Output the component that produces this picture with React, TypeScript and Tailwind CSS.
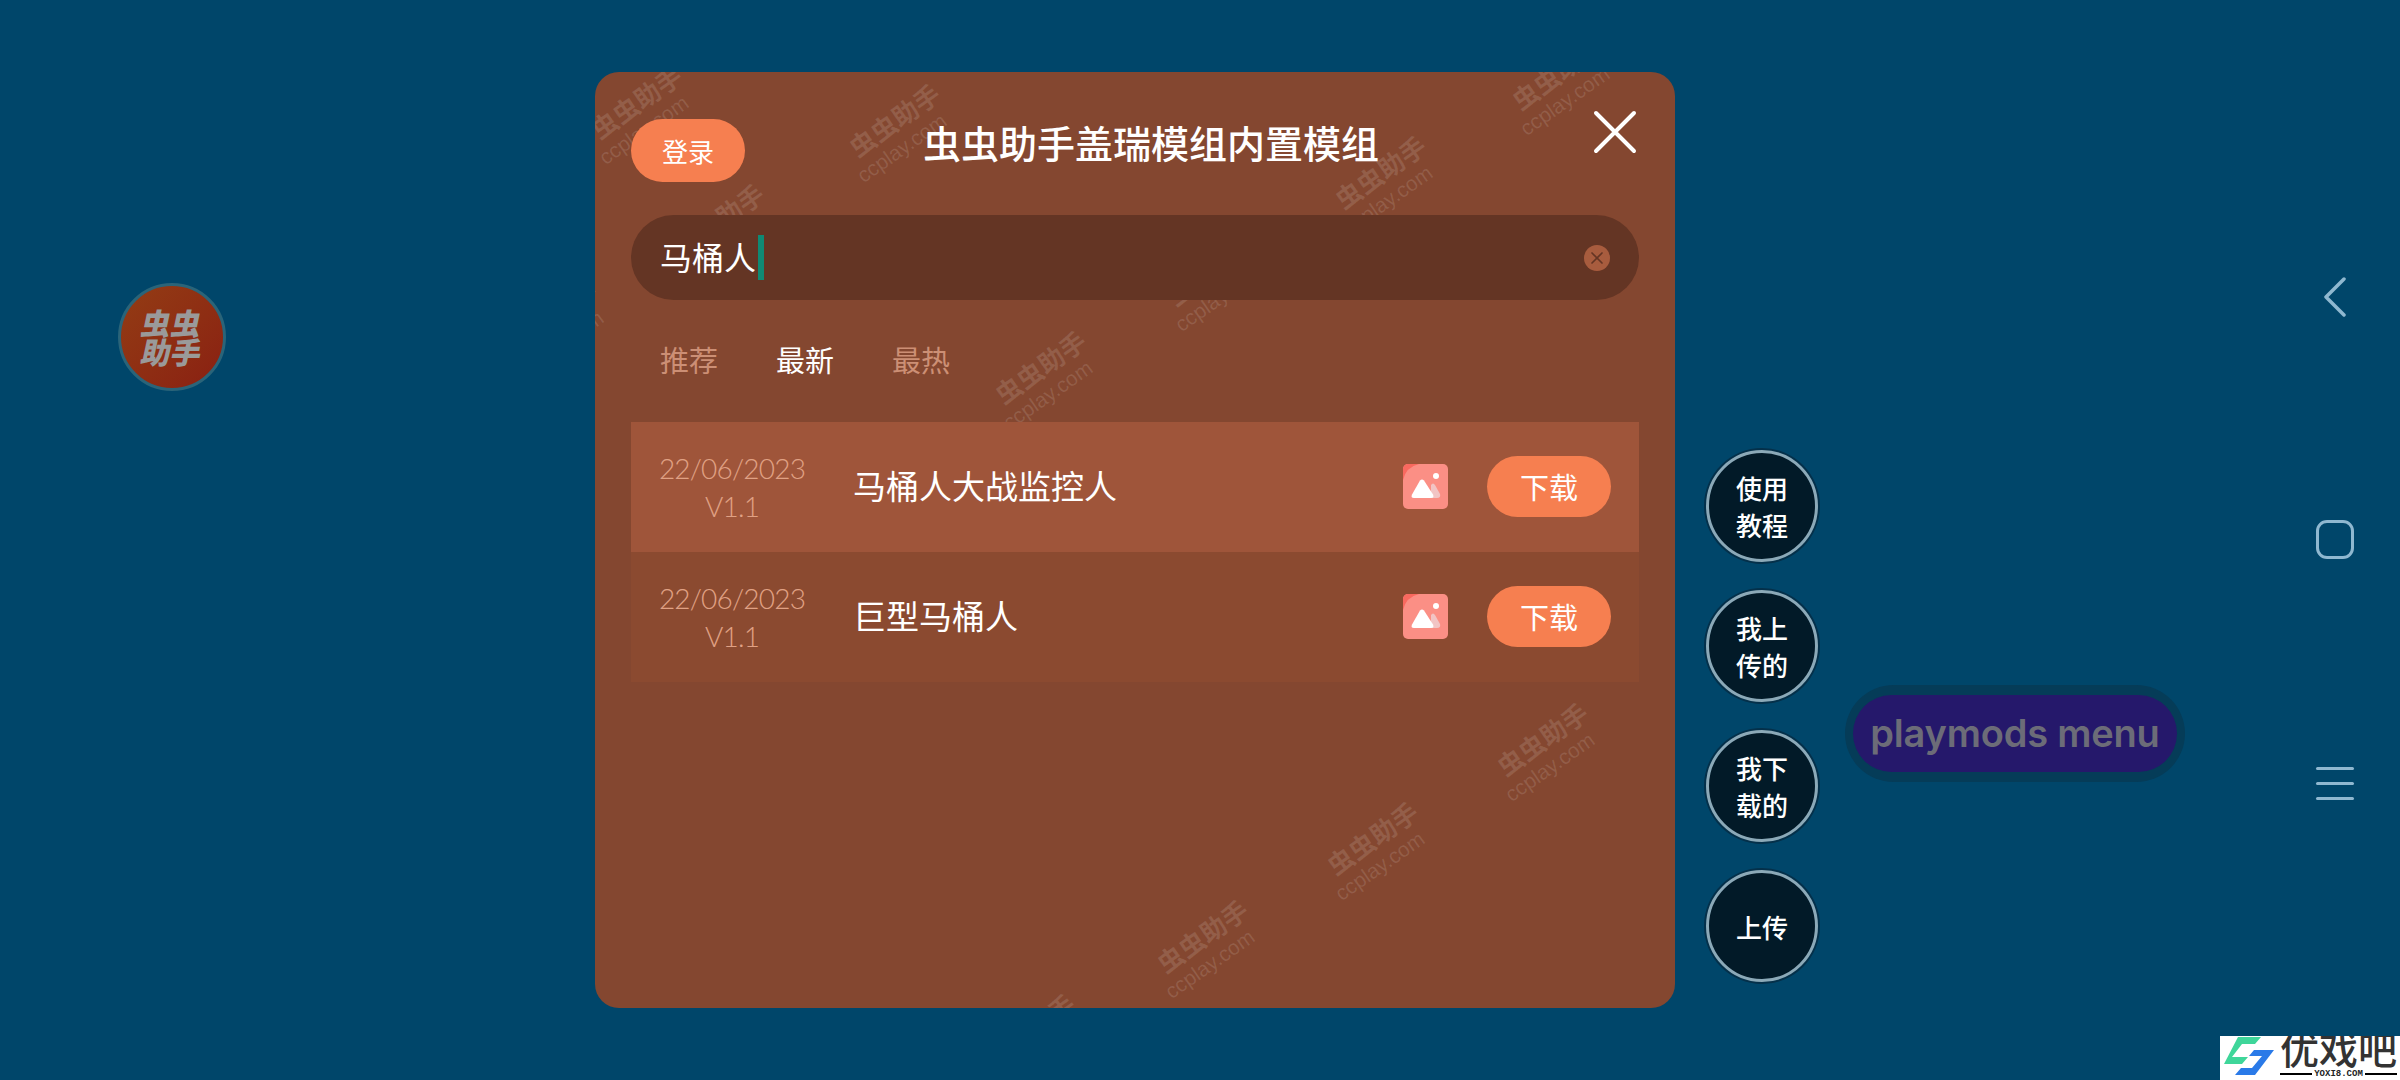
import React from "react";
import { X } from "lucide-react";

const cjk = "font-['Noto_Sans_CJK_SC','Noto_Sans',sans-serif]";

const watermarks = [
  "left-[-21px] top-[11px]",
  "left-[237px] top-[29px]",
  "left-[61px] top-[129px]",
  "left-[723px] top-[81px]",
  "left-[900px] top-[-18px]",
  "left-[383px] top-[276px]",
  "left-[555px] top-[178px]",
  "left-[-106px] top-[226px]",
  "left-[885px] top-[648px]",
  "left-[715px] top-[747px]",
  "left-[545px] top-[845px]",
  "left-[372px] top-[939px]",
];

const mods = [
  { name: "马桶人大战监控人", bg: "bg-[#9f553a]" },
  { name: "巨型马桶人", bg: "bg-[#8b4a30]" },
];

const sideButtons = [["使用", "教程"], ["我上", "传的"], ["我下", "载的"], ["上传"]];

const ImageIcon: React.FC = () => (
  <svg width="45" height="45" viewBox="0 0 45 45">
    <rect width="45" height="45" rx="5" fill="#fb8f85" />
    <path d="M0 16V5a5 5 0 0 1 5-5h11Q3 3 0 16Z" fill="#f9695f" />
    <circle cx="33" cy="12" r="3" fill="#fff" />
    <path d="M28 21q2-3 4 0l5 9q1 4-3 4h-6Z" fill="#f2c4c4" />
    <path d="M17 16.500q2-2 4 0l9 14q1.500 3.500-2 3.500H11q-3.500 0-2-3.500Z" fill="#fff" />
  </svg>
);

const App: React.FC = () => {
  return (
    <div className={`relative flex h-[1080px] w-[2400px] overflow-hidden bg-[#00466a] pl-[595px] pt-[72px] ${cjk}`}>
      {/* floating logo */}
      <div className="absolute left-[118px] top-[283px] flex h-[108px] w-[108px] flex-col items-center justify-center rounded-full border-[3px] border-[#2a6479] bg-linear-to-br from-[#933c14] to-[#8a1f12] text-[30px] leading-[29px] font-black text-[#9a9a9a]">
        <span className="-skew-x-12">虫虫</span>
        <span className="-skew-x-12">助手</span>
      </div>

      {/* main dialog */}
      <div className="relative h-[936px] w-[1080px] shrink-0 overflow-hidden rounded-[24px] bg-[#844730] px-[36px]">
        {watermarks.map((pos) => (
          <div
            key={pos}
            className={`absolute flex h-[60px] w-[140px] -rotate-[35deg] flex-col items-center text-white/12 ${pos}`}
          >
            <span className="text-[26px] leading-[32px] font-bold whitespace-nowrap">虫虫助手</span>
            <span className="mr-[20px] font-['Liberation_Sans',sans-serif] text-[21px] leading-[24px] whitespace-nowrap">ccplay.com</span>
          </div>
        ))}

        <div className="relative flex h-[143px] items-start pt-[38px]">
          <button className="mt-[9px] flex h-[63px] w-[114px] items-center justify-center rounded-full bg-[#f67f50] text-[26px] text-white">
            登录
          </button>
          <h1 className="ml-[178px] mt-[7px] text-[38px] leading-[50px] font-medium whitespace-nowrap text-white">
            虫虫助手盖瑞模组内置模组
          </h1>
          <svg width="44" height="44" viewBox="0 0 44 44" fill="none" stroke="#fff" strokeWidth="4" strokeLinecap="round" className="ml-auto mr-[2px]">
            <path d="M3 3l38 38M41 3L3 41" />
          </svg>
        </div>

        <div className="relative flex h-[85px] items-center rounded-full bg-[#643524] pl-[29px] pr-[29px]">
          <span className="mb-[4px] text-[32px] leading-[40px] text-white">马桶人</span>
          <span className="ml-[2px] h-[45px] w-[6px] bg-[#0f8a74]" />
          <span className="ml-auto flex h-[26px] w-[26px] items-center justify-center rounded-full bg-[#a85c3e] text-[#643524]">
            <X size={20} strokeWidth={2} />
          </span>
        </div>

        <div className="relative mt-[41px] flex gap-[58px] pl-[29px] text-[29px] leading-[36px] text-[#cc8f75]">
          <span>推荐</span>
          <span className="text-white">最新</span>
          <span>最热</span>
        </div>

        <div className="relative mt-[45px]">
          {mods.map((mod) => (
            <div key={mod.name} className={`flex h-[130px] items-center pl-[28px] pr-[28px] ${mod.bg}`}>
              <div className="flex w-[146px] flex-col items-center font-['Lato',sans-serif] text-[28px] leading-[38px] font-light tracking-[-0.8px] text-[#e0a184]">
                <span>22/06/2023</span>
                <span>V1.1</span>
              </div>
              <span className="mb-[2px] ml-[48px] text-[33px] text-white">{mod.name}</span>
              <span className="mb-[1px] ml-auto flex">
                <ImageIcon />
              </span>
              <button className="mb-[1px] ml-[39px] flex h-[61px] w-[124px] items-center justify-center rounded-full bg-[#f67f50] text-[29px] text-white">
                下载
              </button>
            </div>
          ))}
        </div>
      </div>

      {/* side actions */}
      <div className="ml-[31px] mt-[378px] flex flex-col gap-[28px]">
        {sideButtons.map((lines) => (
          <button
            key={lines.join("")}
            className="flex h-[112px] w-[112px] flex-col items-center justify-center rounded-full border-[3px] border-[#8ba9b8] bg-[#021a28] text-[26px] leading-[37px] font-medium text-white shadow-[0_0_0_2px_#04304a]"
          >
            {lines.map((line) => (
              <span key={line}>{line}</span>
            ))}
          </button>
        ))}
      </div>

      {/* floating menu */}
      <div className="absolute left-[1845px] top-[685px] flex h-[97px] w-[340px] items-center justify-center rounded-full bg-[#053c58] px-[8px] py-[10px]">
        <div className="flex h-full w-full items-center justify-center rounded-full bg-[#25186b] font-['Inter',sans-serif] text-[38px] font-semibold tracking-[-0.2px] text-[#6c6c78]">
          playmods menu
        </div>
      </div>

      {/* system nav */}
      <div className="ml-auto mr-[46px] mt-[205px] flex w-[38px] flex-col items-center text-[#8fb8d0]">
        <svg width="24" height="40" viewBox="0 0 24 40" fill="none" stroke="currentColor" strokeWidth="3.500" strokeLinecap="round" strokeLinejoin="round">
          <path d="M21 2L3 20l18 18" />
        </svg>
        <div className="mt-[203px] h-[39px] w-[38px] rounded-[11px] border-[3px] border-current" />
        <div className="mt-[208px] flex w-full flex-col gap-[12px]">
          <div className="h-[3px] rounded-full bg-current" />
          <div className="h-[3px] rounded-full bg-current" />
          <div className="h-[3px] rounded-full bg-current" />
        </div>
      </div>

      {/* site badge */}
      <div className="absolute bottom-0 right-0 flex h-[44px] w-[180px] items-start overflow-hidden bg-white pl-[2px]">
        <svg width="54" height="44" viewBox="0 0 54 44" className="shrink-0">
          <path d="M16 1H39L33 8H20L10 21H26L20 28H2Z" fill="#3fd69a" />
          <path d="M32 14H52L33 39H13L19 32H30L40 20H27Z" fill="#2a7ae8" />
        </svg>
        <div className="ml-[4px] flex flex-col items-center">
          <span className="mt-[-10px] text-[39px] leading-[42px] font-medium whitespace-nowrap text-[#333]">优戏吧</span>
          <div className="mt-[1px] flex items-center gap-[2px]">
            <span className="h-[2px] w-[32px] bg-black" />
            <span className="font-['Liberation_Mono',monospace] text-[9px] leading-[10px] font-bold text-[#222]">YOXI8.COM</span>
            <span className="h-[2px] w-[32px] bg-black" />
          </div>
        </div>
      </div>
    </div>
  );
};

export default App;
